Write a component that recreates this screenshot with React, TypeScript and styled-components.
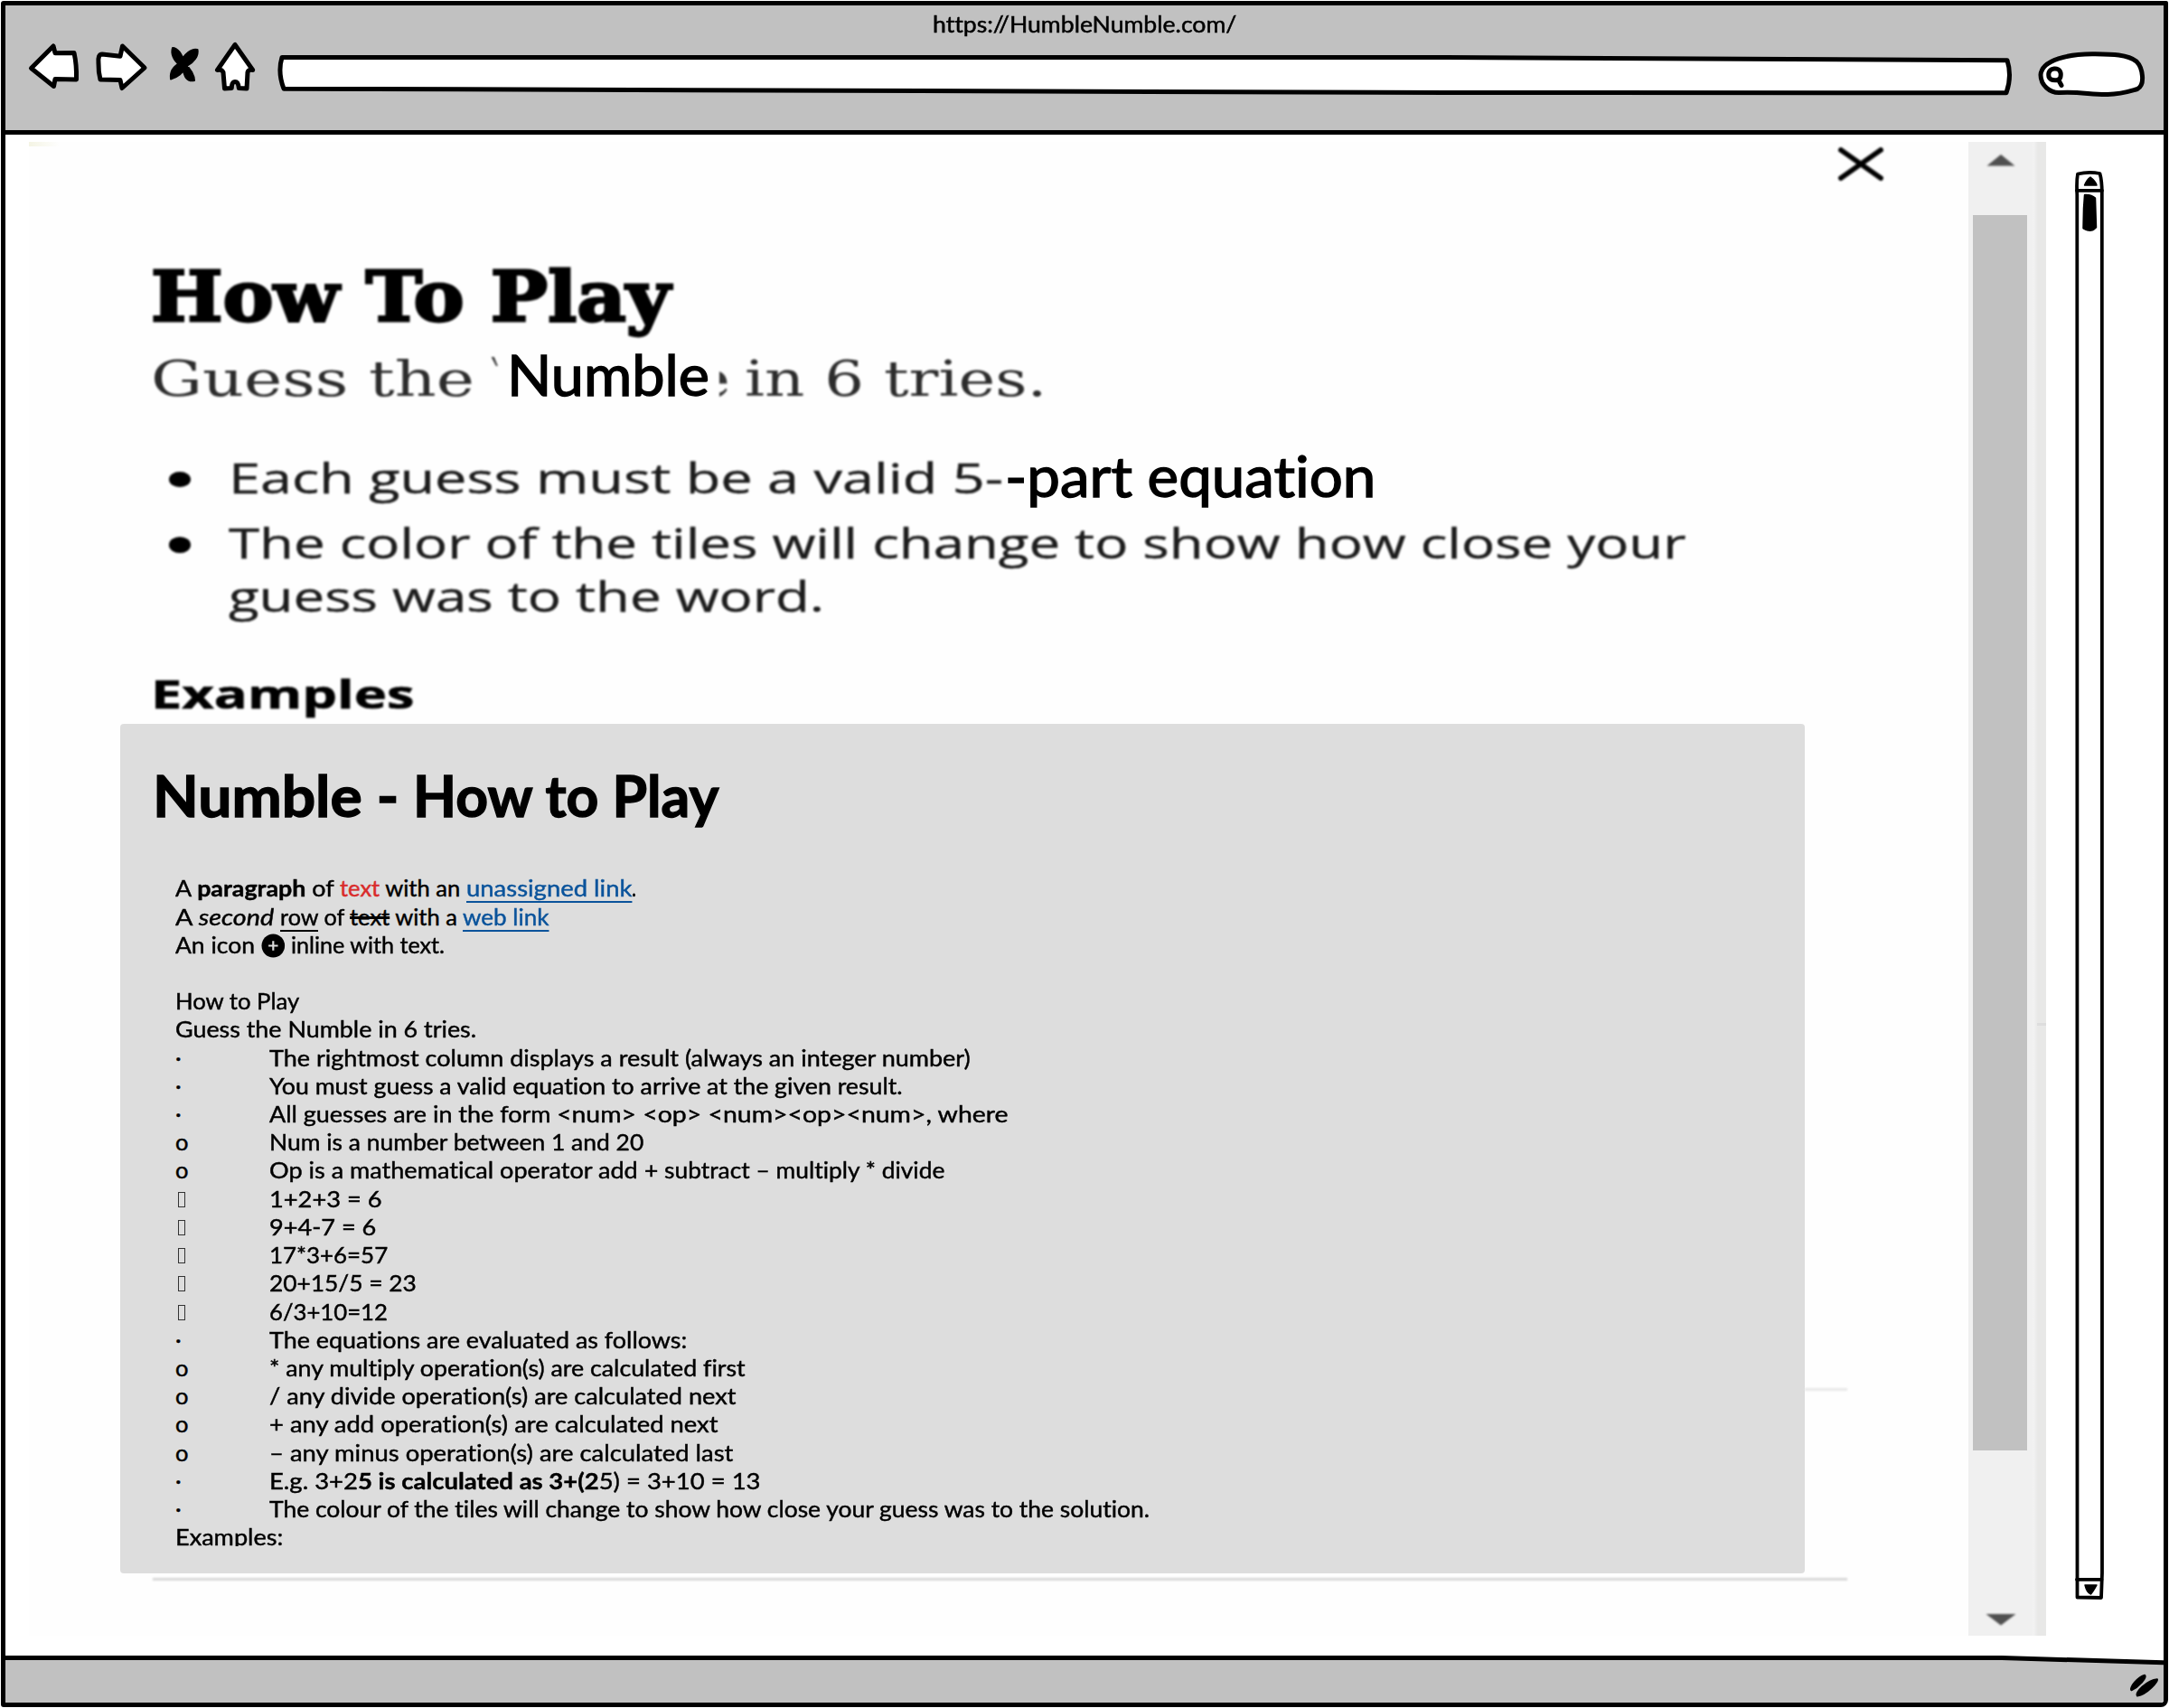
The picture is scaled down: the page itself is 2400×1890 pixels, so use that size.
import React, { ReactNode, useLayoutEffect, useRef, useState } from 'react';
import styled, { createGlobalStyle, css } from 'styled-components';

const sketchFont = `Lato, 'Open Sans', sans-serif`;
const GlobalStyle = createGlobalStyle`
  * { box-sizing: border-box; }
  body {
    margin: 0;
    background: #fff;
    color: #000;
    font-family: ${sketchFont};
    font-variant-ligatures: none;
    overflow: hidden;
  }
  h1, h2, h3, p, ul { margin: 0; padding: 0; font-weight: inherit; font-size: inherit; list-style: none; }
`;

/* ---------- text that fills a given measure ---------- */
const Measure = styled.span<{ $width: number }>`
  display: block;
  flex: none;
  width: ${(p) => p.$width}px;
  white-space: pre;
`;
const Stretch = styled.span`
  display: inline-block;
  transform-origin: 0 50%;
`;
function Fit({ width, children }: { width: number; children: ReactNode }) {
  const ref = useRef<HTMLSpanElement>(null);
  const [scale, setScale] = useState(1);
  useLayoutEffect(() => {
    const natural = ref.current?.offsetWidth ?? 0;
    if (natural) setScale(width / natural);
  }, [width]);
  return (
    <Measure $width={width}>
      <Stretch ref={ref} style={{ transform: `scaleX(${scale})` }}>{children}</Stretch>
    </Measure>
  );
}

/* ---------- browser window ---------- */
const Page = styled.div`
  width: 2400px;
  height: 1890px;
  padding: 1px;
`;
const Frame = styled.div`
  display: flex;
  flex-direction: column;
  width: 2398px;
  height: 1888px;
  border: 5px solid #000;
  border-radius: 3px 2px 8px 3px;
  overflow: hidden;
`;
const Header = styled.header`
  flex: none;
  height: 142.5px;
  background: #c1c1c1;
  border-bottom: 5px solid #000;
`;
const Address = styled.div`
  display: flex;
  justify-content: center;
  height: 38px;
  line-height: 40px;
  font-size: 25.5px;
  -webkit-text-stroke: 0.5px #000;
`;
const Toolbar = styled.div`
  display: flex;
  padding-left: 22px;
`;
const Drawing = styled.svg<{ $before?: number }>`
  display: block;
  flex: none;
  margin-left: ${(p) => p.$before ?? 0}px;
  fill: #fff;
  stroke: #000;
  stroke-width: 5;
  stroke-linejoin: round;
  stroke-linecap: round;
`;
const Main = styled.main`
  display: flex;
  flex: 1;
  min-height: 0;
  padding: 8px 0 0 26px;
`;
const StatusBar = styled.footer`
  flex: none;
  height: 52px;
  background: #fff;
`;

/* ---------- embedded page ---------- */
const Doc = styled.article`
  flex: none;
  width: 2146px;
  height: 1653.5px;
  padding-left: 135px;
  background: linear-gradient(90deg, #f4f4e4, #fefefe) 0 0 / 34px 5px no-repeat, #fefefe;
`;
const soft = css`
  filter: blur(1px);
`;
const CloseRow = styled.div`
  display: flex;
  justify-content: flex-end;
  height: 126.2px;
  padding-right: 88px;
`;
const SoftDrawing = styled(Drawing)`
  ${soft}
`;
const Heading = styled.h1`
  height: 97px;
  font: 700 77px/90px 'DejaVu Serif', serif;
  -webkit-text-stroke: 2.8px #000;
  ${soft}
`;
const Intro = styled.div`
  display: flex;
  height: 80px;
`;
const SlabText = styled.div<{ $ml?: number }>`
  flex: none;
  margin-left: ${(p) => p.$ml ?? 0}px;
  font: 400 54px/80px 'DejaVu Serif', serif;
  color: #2c2c2c;
  ${soft}
`;
const Note = styled.div<{ $ml: number; $lh: number }>`
  flex: none;
  margin-left: ${(p) => p.$ml}px;
  font-size: 61px;
  line-height: ${(p) => p.$lh}px;
  -webkit-text-stroke: 1.4px #000;
`;
const Rules = styled.ul`
  display: flex;
  flex-direction: column;
  gap: 14px;
  padding: 40px 0 50px 20px;
`;
const Rule = styled.li`
  display: flex;
`;
const Dot = styled.i`
  flex: none;
  width: 24px;
  height: 17.5px;
  margin: 22px 42px 0 0;
  border-radius: 50%;
  background: #000;
  ${soft}
`;
const RuleText = styled.div`
  font: 400 45px/58.4px 'Open Sans', sans-serif;
  color: #1c1c1c;
  -webkit-text-stroke: 0.4px #1c1c1c;
  ${soft}
`;
const SubHeading = styled.h2`
  height: 62.3px;
  font: 700 43.5px/58px 'Open Sans', sans-serif;
  -webkit-text-stroke: 0.6px #000;
  ${soft}
`;
const PanelRow = styled.div`
  display: flex;
  align-items: flex-start;
  margin-left: -34px;
`;
const Divider = styled.div<{ $w: number; $mt: number; $ml?: number; $tone: string }>`
  width: ${(p) => p.$w}px;
  height: 3px;
  margin: ${(p) => p.$mt}px 0 0 ${(p) => p.$ml ?? 0}px;
  background: ${(p) => p.$tone};
  ${soft}
`;

/* ---------- instruction panel ---------- */
const Panel = styled.section`
  flex: none;
  width: 1864px;
  height: 939.5px;
  padding: 39.2px 0 0 36px;
  border-radius: 4px;
  background: #ddd;
`;
const PanelTitle = styled.h2`
  display: flex;
  font-weight: 700;
  font-size: 63px;
  line-height: 80px;
  -webkit-text-stroke: 1.4px #000;
`;
const Lines = styled.div`
  height: 743.4px;
  margin: 46.9px 0 0 25px;
  overflow: hidden;
  font-size: 25.5px;
  line-height: 31.23px;
  -webkit-text-stroke: 0.45px currentColor;
`;
const Line = styled.div`
  display: flex;
  height: 31.23px;
`;
const Marker = styled.span`
  flex: none;
  width: 104px;
`;
const MissingGlyph = styled.i`
  display: block;
  width: 8px;
  height: 17px;
  margin: 8px 0 0 3px;
  border: 1px solid #333;
`;
const Red = styled.span`color: #d92b2b;`;
const Under = styled.span`
  text-decoration: underline;
  text-decoration-thickness: 2px;
  text-underline-offset: 5px;
  text-decoration-skip-ink: none;
`;
const Link = styled(Under)`color: #0a539b;`;
const Struck = styled.span`
  text-decoration: line-through;
  text-decoration-thickness: 2.5px;
`;
const PlusIcon = styled.svg`
  width: 27px;
  height: 27px;
  vertical-align: -5px;
`;

/* ---------- scroll bar of the embedded page ---------- */
const Track = styled.div`
  display: flex;
  flex-direction: column;
  align-items: flex-start;
  flex: none;
  width: 86px;
  height: 1653.5px;
  background:
    linear-gradient(#ddd, #ddd) 76px 975px / 10px 3px no-repeat,
    linear-gradient(90deg, #f0f0f0 0 70px, #f2f2f2 72px, #e8e8e7 77px 100%);
`;
const Thumb = styled.div`
  width: 60px;
  height: 1367px;
  margin-left: 5px;
  background: #c1c1c1;
`;
const Arrow = styled.svg<{ $h: number }>`
  display: block;
  width: 86px;
  height: ${(p) => p.$h}px;
  fill: #505050;
  ${soft}
`;

/* Each part of a line is a run of text with its own measure. */
type Part = [number, ReactNode];
type Row = { mark?: '·' | 'o' | 'box'; parts: Part[] };
const rows: Row[] = [
  {
    parts: [
      [182, <>A <b>paragraph</b> of </>],
      [140, <><Red>text</Red> with an </>],
      [183, <Link>unassigned link</Link>],
      [5, '.'],
    ],
  },
  {
    parts: [
      [116, <>A <i>second</i> </>],
      [77, <><Under>row</Under> of </>],
      [125, <><Struck>text</Struck> with a </>],
      [95, <Link>web link</Link>],
    ],
  },
  {
    parts: [
      [94.5, 'An icon '],
      [203, (
        <><PlusIcon viewBox="0 0 27 27"><circle cx="13.5" cy="13.5" r="13" /><path d="M13.5 8.2v10.6M8.2 13.5h10.6" stroke="#ddd" strokeWidth="2.2" /></PlusIcon> inline with text.</>
      )],
    ],
  },
  { parts: [] },
  { parts: [[137, 'How to Play']] },
  { parts: [[333, 'Guess the Numble in 6 tries.']] },
  { mark: '·', parts: [[776, 'The rightmost column displays a result (always an integer number)']] },
  { mark: '·', parts: [[701, 'You must guess a valid equation to arrive at the given result.']] },
  { mark: '·', parts: [[318, 'All guesses are in the form '], [499, '<num> <op> <num><op><num>, where']] },
  { mark: 'o', parts: [[414, 'Num is a number between 1 and 20']] },
  { mark: 'o', parts: [[415, 'Op is a mathematical operator add '], [332, '+ subtract – multiply * divide']] },
  { mark: 'box', parts: [[125, '1+2+3 = 6']] },
  { mark: 'box', parts: [[118, '9+4-7 = 6']] },
  { mark: 'box', parts: [[131, '17*3+6=57']] },
  { mark: 'box', parts: [[163, '20+15/5 = 23']] },
  { mark: 'box', parts: [[131, '6/3+10=12']] },
  { mark: '·', parts: [[462, 'The equations are evaluated as follows:']] },
  { mark: 'o', parts: [[527, '* any multiply operation(s) are calculated first']] },
  { mark: 'o', parts: [[516, '/ any divide operation(s) are calculated next']] },
  { mark: 'o', parts: [[497, '+ any add operation(s) are calculated next']] },
  { mark: 'o', parts: [[513, '– any minus operation(s) are calculated last']] },
  { mark: '·', parts: [[544, <>E.g. 3+2<b>5 is calculated as 3+(2</b>5) = 3+10 = 13</>]] },
  { mark: '·', parts: [[974, 'The colour of the tiles will change to show how close your guess was to the solution.']] },
  { parts: [[119, 'Examples:']] },
];

export default function App() {
  return (
    <Page>
      <GlobalStyle />
      <Frame>
        <Header>
          <Address><Fit width={336}>https://HumbleNumble.com/</Fit></Address>
          <Toolbar>
            <Drawing width="64" height="68" viewBox="28 44 64 68">
              <path d="M34.5 75.5 L59 51 L61 58.7 L82 58.5 Q85 72 84.5 88 L61 87.5 L59.5 95.5 Z" />
            </Drawing>
            <Drawing $before={10} width="66" height="68" viewBox="102 44 66 68">
              <path d="M109 70 Q108 60 113 60 L133 62.3 L135.5 51 L160 75 L135 97.5 L133 88.5 L111 88 Q108.8 80 109 70Z" />
            </Drawing>
            <Drawing $before={16} width="40" height="68" viewBox="184 44 40 68">
              <path
                d="M191 53 C197 53 202 62 205 71 C211 76 215 84 215 89 C211 90 206 89 204 82 C203 77 202 75 199 72 C192 67 189 59 191 53Z M218.5 55 C220 62 214 69 208 72 C203 77 201 84 189 87.5 C188 79 193 73 199 70 C204 60 212 53 218.5 55Z"
                style={{ fill: '#000', strokeWidth: 2 }}
              />
            </Drawing>
            <Drawing $before={8} width="56" height="68" viewBox="232 44 56 68">
              <path d="M260 49.5 L240.5 77.5 Q245.5 76.5 247 80 L248.5 98 L256.3 97.5 Q256.5 90.5 260 90.5 Q263.7 90.5 264.3 97.5 L273 98 L274 80 Q275 76.5 279.7 77.5 Z" />
            </Drawing>
            <Drawing $before={12} width="1936" height="68" viewBox="300 44 1936 68">
              <path d="M312 63.5 L1600 63.5 L2221 66.8 Q2226.5 84 2220 102.8 L1600 102.5 L314 98.2 Q307 80 312 63.5Z" />
            </Drawing>
            <Drawing $before={12} width="134" height="68" viewBox="2248 44 134 68">
              <path d="M2317 59.8 C2290 59.5 2259 66 2258 83 C2258 94 2268 103 2279 102.5 C2300 101 2315 105 2332 104.5 C2348 104 2356 101 2365 98.5 C2374 94 2371 75 2364 68 C2354 60 2336 60 2317 59.8Z" />
              <path d="M2278 89 L2281 94.5 M2273 76 C2279 75.5 2281 80 2280 85 C2279 90 2269 90 2267 85 C2266 80 2268 76.5 2273 76Z" />
            </Drawing>
          </Toolbar>
        </Header>

        <Main>
          <Doc>
            <CloseRow>
              <SoftDrawing width="64" height="60" viewBox="2026 156 64 60">
                <path d="M2037 165 L2081 196 M2081 165 L2037 196" style={{ strokeWidth: 5.8 }} />
              </SoftDrawing>
            </CloseRow>
            <Heading><Fit width={575}>How To Play</Fit></Heading>
            <Intro>
              <SlabText><Fit width={358}>Guess the</Fit></SlabText>
              <SlabText $ml={16}><Fit width={16}>`</Fit></SlabText>
              <Note $ml={4} $lh={69}><Fit width={224}>Numble</Fit></Note>
              <SoftDrawing $before={11} width="10" height="80" viewBox="796 380 10 80">
                <path d="M796 411 Q804 414 804.5 424.5 H796Z M796 434.5 Q801 433 803 429.5 L804.5 431.5 Q801 437 796 439Z" style={{ fill: '#333', stroke: 'none' }} />
              </SoftDrawing>
              <SlabText $ml={18}><Fit width={334}>in 6 tries.</Fit></SlabText>
            </Intro>
            <Rules>
              <Rule>
                <Dot />
                <RuleText><Fit width={857}>Each guess must be a valid 5-</Fit></RuleText>
                <Note $ml={2} $lh={54.4}><Fit width={410}>-part equation</Fit></Note>
              </Rule>
              <Rule>
                <Dot />
                <RuleText>
                  <Fit width={1613}>The color of the tiles will change to show how close your</Fit>
                  <Fit width={659}>guess was to the word.</Fit>
                </RuleText>
              </Rule>
            </Rules>
            <SubHeading><Fit width={292}>Examples</Fit></SubHeading>
            <PanelRow>
              <Panel>
                <PanelTitle>
                  <Fit width={288}>Numble - </Fit>
                  <Fit width={338}>How to Play</Fit>
                </PanelTitle>
                <Lines>
                  {rows.map((r, i) => (
                    <Line key={i}>
                      {r.mark && <Marker>{r.mark === 'box' ? <MissingGlyph /> : r.mark}</Marker>}
                      {r.parts.map(([w, text], j) => <Fit key={j} width={w}>{text}</Fit>)}
                    </Line>
                  ))}
                </Lines>
              </Panel>
              <Divider $w={47} $mt={734.5} $tone="#e8e8e8" />
            </PanelRow>
            <Divider $w={1875} $mt={5} $ml={2} $tone="#d8d8d8" />
          </Doc>

          <Track>
            <Arrow $h={81} viewBox="2178 156.5 86 81"><path d="M2198.5 183 L2214 170.5 L2229.5 183Z" /></Arrow>
            <Thumb />
            <Arrow $h={205} viewBox="2178 1605 86 205"><path d="M2197.5 1786 L2230.5 1786 L2214 1798.5Z" /></Arrow>
          </Track>

          <Drawing $before={26} width="42" height="1653" viewBox="2290 156.5 42 1653" style={{ strokeWidth: 3.8 }}>
            <path d="M2299 192 Q2311 189 2323.5 191.5 Q2326 200 2325.8 215 L2326 1740 L2325 1767.5 L2298.5 1767 L2298.3 215 Q2297.5 200 2299 192Z" />
            <path d="M2298 210.3 H2326 M2298 1747.3 H2325.5" />
            <path d="M2313 195.5 Q2319 200 2320 204.5 L2306.5 204.5 Q2309 198 2313 195.5Z M2307 1753.5 H2320 Q2316 1761 2313.5 1763.5 Q2309 1762 2307 1753.5Z" style={{ fill: '#000', strokeWidth: 1.4 }} />
            <path d="M2307 215.5 Q2314 215 2318 219 L2319 251 Q2314 257 2305.5 252 L2306 230Z" style={{ fill: '#000', strokeWidth: 2.5 }} />
          </Drawing>
        </Main>

        <StatusBar>
          <Drawing width="2388" height="52" viewBox="6 1832 2388 52">
            <path d="M0 1834.5 L2215 1834.5 L2400 1840 V1890 H0Z" style={{ fill: '#c1c1c1' }} />
            <path d="M2373 1853.5 C2377 1856 2366 1867 2358.5 1870.5 C2355 1868 2366 1855 2373 1853.5Z M2387 1858 C2389 1860 2376 1875 2365 1876.8 C2361 1873 2376 1859 2387 1858Z" style={{ fill: '#000', strokeWidth: 1.6 }} />
          </Drawing>
        </StatusBar>
      </Frame>
    </Page>
  );
}
